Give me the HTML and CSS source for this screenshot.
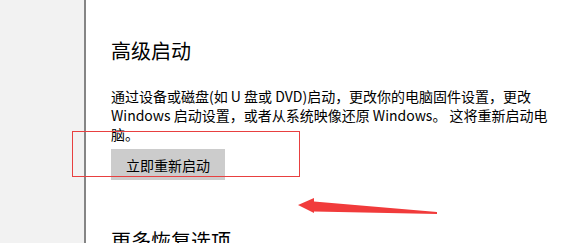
FILE: index.html
```html
<!DOCTYPE html>
<html lang="zh-CN">
<head>
    <meta charset="UTF-8">
    <title>恢复</title>
    <link rel="stylesheet" href="styles.css">
</head>
<body>
    <div class="window">
        <div class="sidebar"></div>
        <div class="content">
            <h2 class="section-title">高级启动</h2>
            <p class="desc">通过设备或磁盘(如 U 盘或 DVD)启动，更改你的电脑固件设置，更改 Windows 启动设置，或者从系统映像还原 Windows。 这将重新启动电脑。</p>
            <button class="restart-btn">立即重新启动</button>
            <h2 class="section-title more">更多恢复选项</h2>
        </div>
    </div>

    <!-- annotations drawn over the screenshot -->
    <div class="mark-box"></div>
    <svg class="mark-arrow" width="150" height="24" viewBox="0 0 150 24">
        <polygon points="2,9 18,2 18,5.5 141,16 141,18 18,15.5 18,17" fill="#f13b3b"/>
    </svg>
</body>
</html>
```

FILE: styles.css
```css
body {
    margin: 0;
    background: #fff;
    font-family: "Noto Sans CJK SC", "Microsoft YaHei", sans-serif;
    color: #000;
    overflow: hidden;
}
.window {
    display: flex;
    height: 243px;
}
.sidebar {
    width: 84px;
    background: #f2f2f2;
    border-right: 2px solid #858585;
}
.content {
    padding: 37px 0 0 25px;
}
.section-title {
    margin: 0;
    font-size: 20px;
    font-weight: normal;
    line-height: 28px;
}
.desc {
    width: 440px;
    margin: 22px 0 0;
    font-size: 14px;
    line-height: 19px;
}
.restart-btn {
    margin-top: 5px;
    height: 31px;
    padding: 0 15px;
    border: none;
    background: #cccccc;
    font-family: inherit;
    font-size: 14px;
    color: #000;
}
.more {
    margin-top: 47px;
}
.mark-box {
    position: absolute;
    left: 72px;
    top: 131px;
    width: 226px;
    height: 44px;
    border: 1px solid #e84040;
}
.mark-arrow {
    position: absolute;
    left: 296px;
    top: 196px;
}
```
